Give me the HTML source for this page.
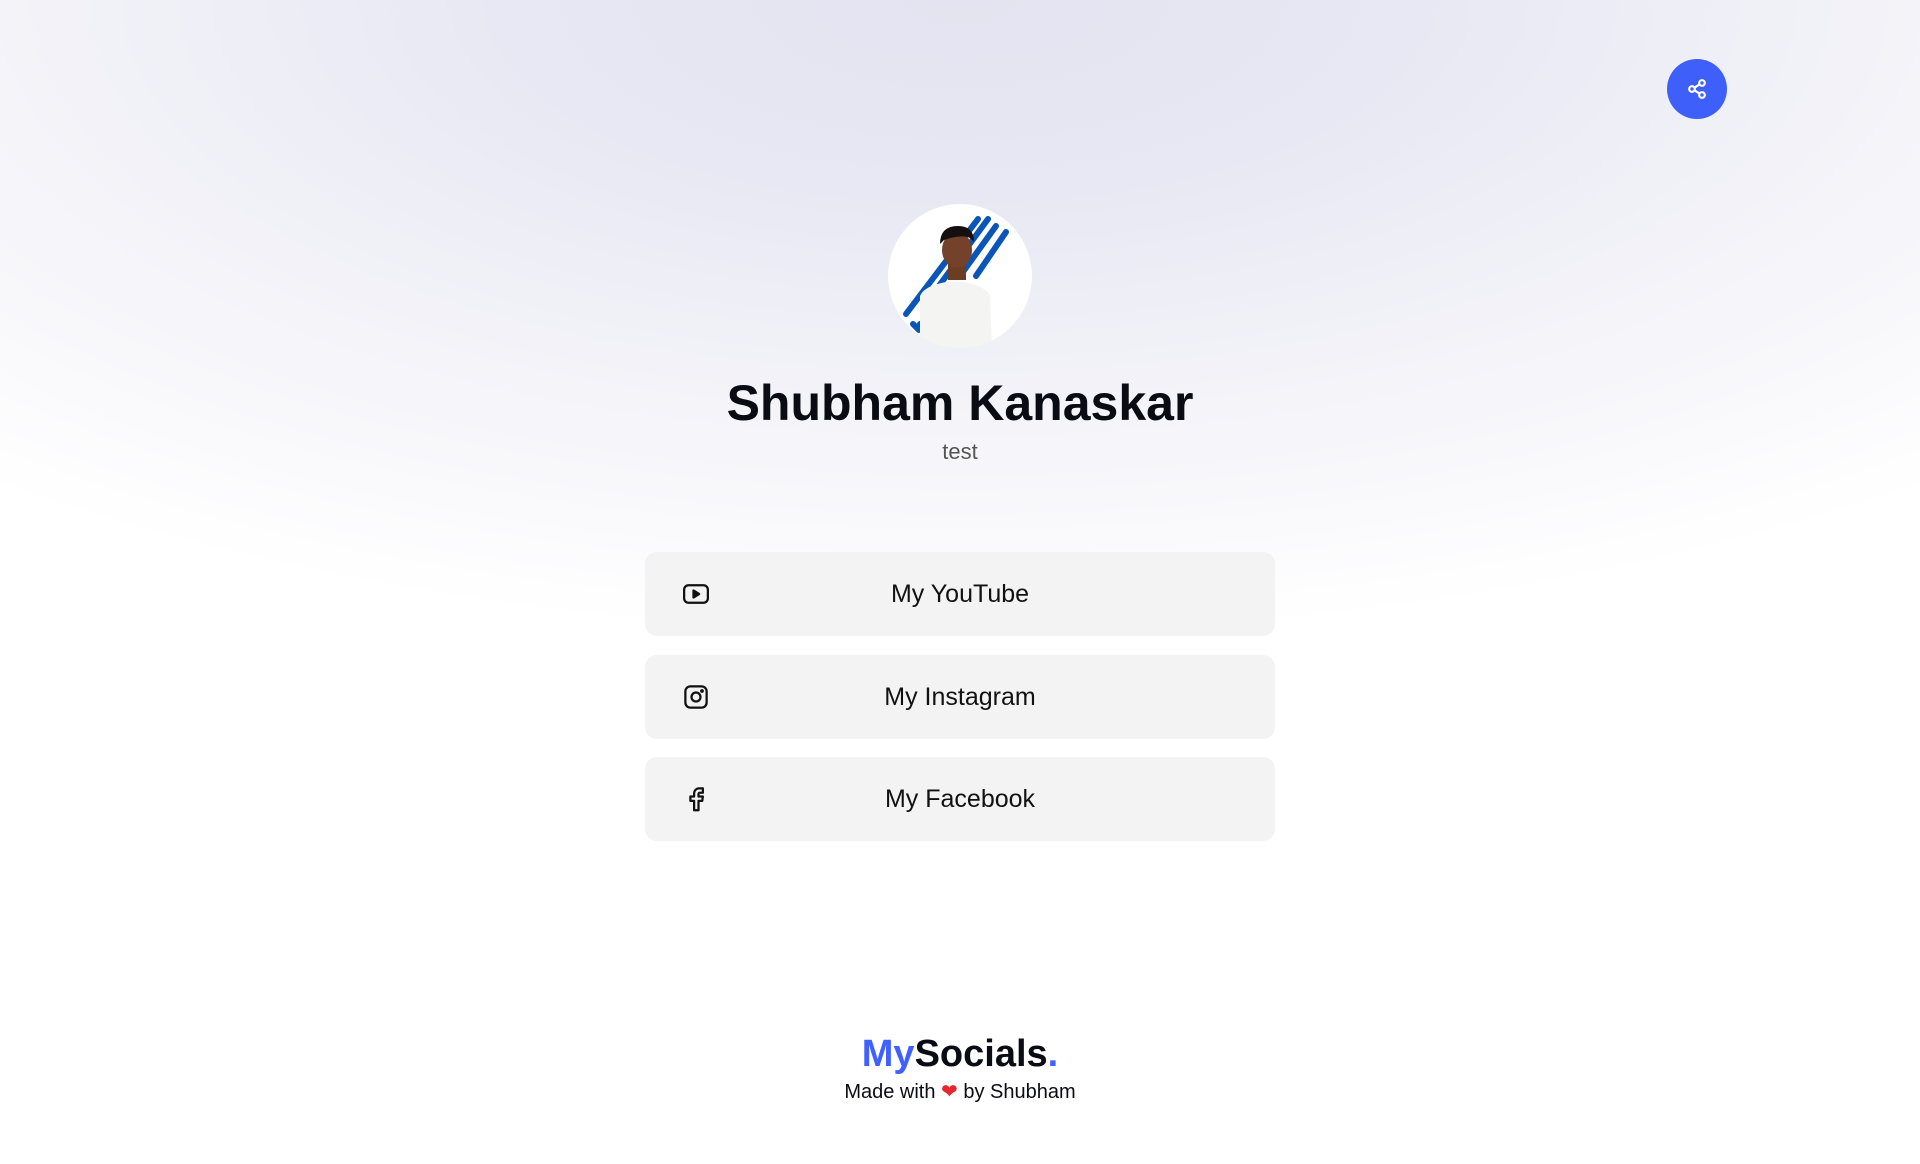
<!DOCTYPE html>
<html><head><meta charset="utf-8"><style>
html,body{margin:0;padding:0}
body{width:1920px;height:1164px;position:relative;overflow:hidden;background:#fff;font-family:"Liberation Sans",sans-serif;color:#0b0b14}
.bg{position:absolute;left:0;top:0;width:1920px;height:700px;background:radial-gradient(ellipse 1500px 640px at 50% 0,#e3e3f1 0%,#e8e8f4 30%,#f2f2f8 60%,#fff 100%)}
.share{position:absolute;left:1667px;top:59px;width:60px;height:60px;border-radius:50%;background:#3f5ffa}
.share svg{position:absolute;left:18px;top:18px}
.avatar{position:absolute;left:888px;top:204px;width:144px;height:144px;border-radius:50%;background:#fff;overflow:hidden}
h1{position:absolute;left:0;width:1920px;top:374px;margin:0;text-align:center;font-size:50px;font-weight:bold}
.sub{position:absolute;left:0;width:1920px;top:439px;text-align:center;font-size:22px;color:#555}
.btn{position:absolute;left:645px;width:630px;height:84px;border-radius:12px;background:#f3f3f3;font-size:25px;line-height:84px;text-align:center;color:#111}
.btn svg{position:absolute;left:680px;top:27px}
.logo{position:absolute;left:0;width:1920px;top:1033px;text-align:center;font-size:38px;font-weight:bold}
.made{position:absolute;left:0;width:1920px;top:1079px;text-align:center;font-size:20px}
</style></head><body>
<div class="bg"></div>
<div class="share"><svg width="24" height="24" viewBox="0 0 24 24" fill="none" stroke="#fff" stroke-width="2.2"><circle cx="17" cy="6" r="2.8"/><circle cx="7" cy="12" r="2.8"/><circle cx="17" cy="18" r="2.8"/><path d="M9.5 10.7l5-3.3M9.5 13.3l5 3.3"/></svg></div>
<div class="avatar"><svg width="144" height="144" viewBox="0 0 144 144">
<g stroke="#0a55b8" stroke-width="6" stroke-linecap="round"><path d="M90 15L18 110"/><path d="M100 15L45 90"/><path d="M108 22L72 72"/><path d="M118 28L88 72"/><path d="M25 120l6 6M32 120l6 8M40 122l4 6"/></g>
<path d="M32 144V92q4-10 26-14l18 0q22 4 26 14l2 52z" fill="#f4f4f2"/>
<rect x="60" y="56" width="18" height="20" fill="#6b3d22"/>
<ellipse cx="69" cy="46" rx="15" ry="18" fill="#74422a"/>
<path d="M52 40q0-18 18-18q16 0 16 16l-4-4q-8-4-26 2z" fill="#151010"/>
</svg></div>
<h1>Shubham Kanaskar</h1>
<div class="sub">test</div>
<div class="btn" style="top:552px">My YouTube<svg style="left:36px" width="30" height="30" viewBox="0 0 24 24" fill="none" stroke="#111" stroke-width="1.8" stroke-linejoin="round"><rect x="2.5" y="5" width="19" height="14" rx="3.5"/><path d="M10 9.2v5.6l4.5-2.8z" fill="#111"/></svg></div>
<div class="btn" style="top:655px">My Instagram<svg style="left:36px" width="30" height="30" viewBox="0 0 24 24" fill="none" stroke="#111" stroke-width="1.8"><rect x="3.5" y="3.5" width="17" height="17" rx="4"/><circle cx="12" cy="12" r="3.6"/><circle cx="16.8" cy="7.2" r="0.6" fill="#111"/></svg></div>
<div class="btn" style="top:757px">My Facebook<svg style="left:36px" width="30" height="30" viewBox="0 0 24 24" fill="none" stroke="#111" stroke-width="1.8" stroke-linejoin="round"><path d="M7.5 10v3.5h3V21h3.5v-7.5h3l0.5-3.5h-3.5V8a1 1 0 0 1 1-1h2.5V3.5H14a4 4 0 0 0-3.5 4V10z"/></svg></div>
<div class="logo"><span style="color:#4060ff">My</span>Socials<span style="color:#4060ff">.</span></div>
<div class="made">Made with <span style="color:#e8262c">❤</span> by Shubham</div>
</body></html>
